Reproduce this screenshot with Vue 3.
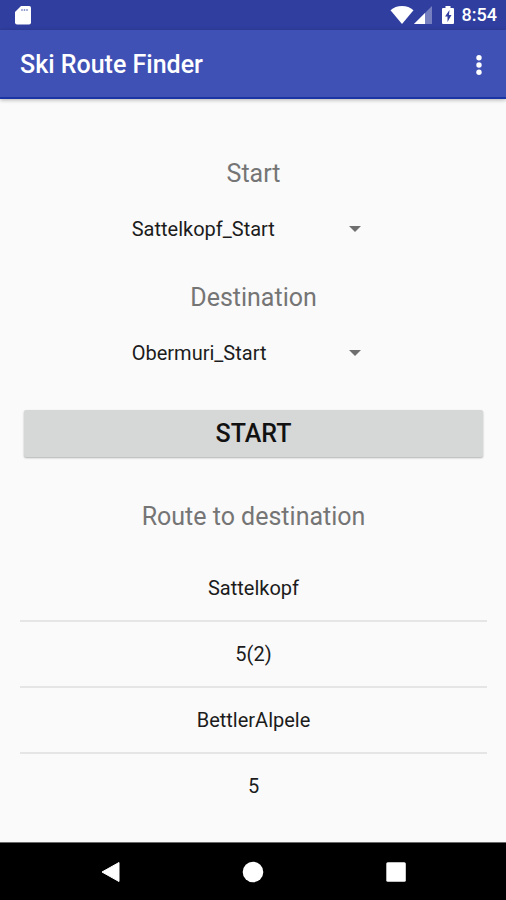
<script setup>
import { ref } from 'vue'

const places = ['Sattelkopf_Start', 'Obermuri_Start']
const start = ref('Sattelkopf_Start')
const destination = ref('Obermuri_Start')
const route = ['Sattelkopf', '5(2)', 'BettlerAlpele', '5']
</script>

<template>
  <div class="screen">
    <div class="status">
      <svg class="sd" width="16" height="20" viewBox="0 0 16 20" aria-hidden="true">
        <path d="M6 1h8.200a1.800 1.800 0 0 1 1.800 1.800V17.500a2 2 0 0 1-2 2H2a2 2 0 0 1-2-2V7z" fill="#fff" />
        <path d="M7 4v2M9.500 4v2M12 4v2" stroke="#8b94cb" stroke-width="1.400" />
      </svg>
      <div class="status-right">
        <svg width="24" height="20" viewBox="0 0 24 20" aria-hidden="true">
          <path d="M12 19 .500 5.200C3.500 2.600 7.500 1 12 1s8.500 1.600 11.500 4.200z" fill="#fff" />
        </svg>
        <svg width="18" height="18" viewBox="0 0 18 18" aria-hidden="true">
          <path d="M18 0v18H0z" fill="#7680c0" />
          <path d="M11 7v11H0z" fill="#fff" />
        </svg>
        <svg class="battery" width="12" height="20" viewBox="0 0 12 20" aria-hidden="true">
          <path d="M3.500 1h5v2H11a1 1 0 0 1 1 1v14a1 1 0 0 1-1 1H1a1 1 0 0 1-1-1V4a1 1 0 0 1 1-1h2.500z" fill="#fff" />
          <path d="M7.500 5 3 11.500h2.500V17L9.500 10H7z" fill="#303f9f" />
        </svg>
        <span class="time">8:54</span>
      </div>
    </div>

    <header class="appbar">
      <h1>Ski Route Finder</h1>
      <button class="more" type="button" aria-label="More options">
        <svg width="6" height="22" viewBox="0 0 6 22" aria-hidden="true">
          <g fill="#fff">
            <circle cx="3" cy="3.700" r="2.700" />
            <circle cx="3" cy="11" r="2.700" />
            <circle cx="3" cy="18.300" r="2.700" />
          </g>
        </svg>
      </button>
    </header>

    <main class="content">
      <form class="form" @submit.prevent>
        <div class="field">
          <label class="label" for="start">Start</label>
          <div class="spinner">
            <select id="start" v-model="start">
              <option v-for="p in places" :key="p">{{ p }}</option>
            </select>
            <svg class="arrow" width="12" height="6" viewBox="0 0 12 6" aria-hidden="true">
              <path d="M0 0h12L6 6z" fill="#6f6f6f" />
            </svg>
          </div>
        </div>
        <div class="field">
          <label class="label" for="destination">Destination</label>
          <div class="spinner">
            <select id="destination" v-model="destination">
              <option v-for="p in places" :key="p">{{ p }}</option>
            </select>
            <svg class="arrow" width="12" height="6" viewBox="0 0 12 6" aria-hidden="true">
              <path d="M0 0h12L6 6z" fill="#6f6f6f" />
            </svg>
          </div>
        </div>
        <button class="go" type="submit">START</button>
      </form>

      <h2 class="label">Route to destination</h2>
      <ul class="route">
        <li v-for="(step, i) in route" :key="i">{{ step }}</li>
      </ul>
    </main>

    <nav class="navbar">
      <button type="button" aria-label="Back">
        <svg width="22" height="22" viewBox="0 0 22 22" aria-hidden="true">
          <path d="M20 1.500v19L3 11z" fill="#fff" stroke="#fff" stroke-linejoin="round" />
        </svg>
      </button>
      <button type="button" aria-label="Home">
        <svg width="22" height="22" viewBox="0 0 22 22" aria-hidden="true">
          <circle cx="11" cy="11" r="10.300" fill="#fff" />
        </svg>
      </button>
      <button type="button" aria-label="Recent apps">
        <svg width="22" height="22" viewBox="0 0 22 22" aria-hidden="true">
          <rect x="1.300" y="1.300" width="19.500" height="19.500" rx="1.500" fill="#fff" />
        </svg>
      </button>
    </nav>
  </div>
</template>

<style>
body {
  margin: 0;
  background: #fafafa;
}
</style>

<style scoped>
.screen {
  display: flex;
  flex-direction: column;
  min-height: 100vh;
  font-family: Roboto, "Liberation Sans", sans-serif;
  background: #fafafa;
}

button {
  border: 0;
  padding: 0;
  background: none;
  font-family: inherit;
  cursor: pointer;
}

svg {
  display: block;
}

.status {
  display: flex;
  align-items: center;
  justify-content: space-between;
  height: 30px;
  padding: 0 9px 0 15px;
  background: #303f9f;
}

.status-right {
  display: flex;
  align-items: center;
}

.battery {
  margin: 0 8px 0 10px;
}

.time {
  color: #fff;
  font-size: 18px;
  font-weight: 500;
  line-height: 32px;
}

.appbar {
  display: flex;
  align-items: center;
  justify-content: space-between;
  box-sizing: border-box;
  height: 69px;
  padding: 3px 12px 0 20px;
  background: #3f51b5;
  border-bottom: 2px solid #1b34a4;
  box-shadow: 0 1px 4px rgba(0, 0, 0, 0.3);
}

.appbar h1 {
  margin: 0;
  color: #fff;
  font-size: 25px;
  font-weight: 500;
  line-height: 32px;
}

.more {
  display: flex;
  align-items: center;
  justify-content: center;
  width: 30px;
  height: 48px;
}

.content {
  flex: 1;
  padding: 60px 19px 24px 20px;
}

.form {
  display: flex;
  flex-direction: column;
  gap: 39px;
}

.field {
  display: flex;
  flex-direction: column;
  align-items: center;
  gap: 25px;
}

.label {
  margin: 0;
  color: #757575;
  font-size: 25px;
  font-weight: 400;
  line-height: 30px;
  text-align: center;
}

.spinner {
  display: flex;
  align-items: center;
  width: 56%;
}

.spinner select {
  flex: 1;
  min-width: 0;
  height: 30px;
  margin: 0 -12px 0 0;
  padding: 0 24px 0 9px;
  appearance: none;
  border: 0;
  background: none;
  color: #1c1c1c;
  font-family: inherit;
  font-size: 20px;
  line-height: 30px;
}

.arrow {
  margin-right: 23px;
  pointer-events: none;
}

.go {
  height: 47px;
  margin: 3px 4px 45px;
  border-radius: 2px;
  background: #d6d7d7;
  box-shadow: 0 1px 2px rgba(0, 0, 0, 0.3);
  color: #111;
  font-size: 25px;
  font-weight: 500;
  line-height: 47px;
}

.route {
  margin: 24px 0 0;
  padding: 0;
  list-style: none;
}

.route li {
  padding: 18px 0;
  color: #1c1c1c;
  font-size: 20px;
  line-height: 28px;
  text-align: center;
}

.route li + li {
  border-top: 2px solid #e5e5e5;
}

.navbar {
  display: grid;
  grid-template-columns: repeat(3, 1fr);
  box-sizing: border-box;
  height: 59px;
  padding: 0 39px 1px;
  background: #000;
  border-top: 1px solid #6a6a6a;
}

.navbar button {
  display: flex;
  align-items: center;
  justify-content: center;
}
</style>
